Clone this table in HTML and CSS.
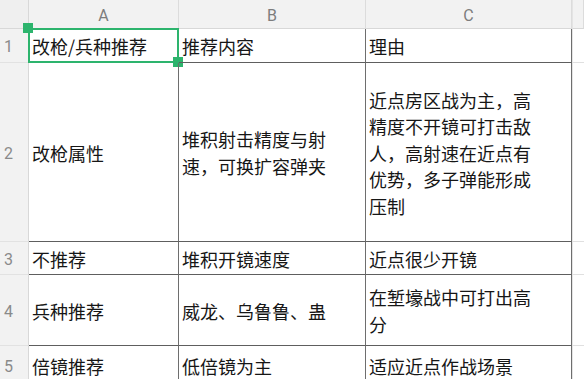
FILE: index.html
```html
<!DOCTYPE html>
<html lang="zh">
<head>
<meta charset="utf-8">
<link rel="stylesheet" href="styles.css">
</head>
<body>
<div class="sheet">
  <div class="corner"></div>
  <div class="colhead">A</div>
  <div class="colhead">B</div>
  <div class="colhead">C</div>
  <div class="colhead extra"></div>

  <div class="rowhead">1</div>
  <div class="cell sel">改枪/兵种推荐
    <div class="selbox"><span class="handle tl"></span><span class="handle br"></span></div>
  </div>
  <div class="cell">推荐内容</div>
  <div class="cell">理由</div>
  <div class="cell extra"></div>

  <div class="rowhead">2</div>
  <div class="cell">改枪属性</div>
  <div class="cell">堆积射击精度与射<br>速，可换扩容弹夹</div>
  <div class="cell">近点房区战为主，高<br>精度不开镜可打击敌<br>人，高射速在近点有<br>优势，多子弹能形成<br>压制</div>
  <div class="cell extra"></div>

  <div class="rowhead">3</div>
  <div class="cell">不推荐</div>
  <div class="cell">堆积开镜速度</div>
  <div class="cell">近点很少开镜</div>
  <div class="cell extra"></div>

  <div class="rowhead">4</div>
  <div class="cell">兵种推荐</div>
  <div class="cell">威龙、乌鲁鲁、蛊</div>
  <div class="cell">在堑壕战中可打出高<br>分</div>
  <div class="cell extra"></div>

  <div class="rowhead">5</div>
  <div class="cell">倍镜推荐</div>
  <div class="cell">低倍镜为主</div>
  <div class="cell">适应近点作战场景</div>
  <div class="cell extra"></div>
</div>
</body>
</html>
```
FILE: styles.css
```css
html, body {
  margin: 0;
  padding: 0;
  background: #ffffff;
  overflow: hidden;
}
body {
  width: 584px;
  height: 379px;
  font-family: "Noto Sans CJK SC", "Noto Sans", sans-serif;
}
.sheet {
  display: grid;
  grid-template-columns: 29px 150px 187px 206px 1fr;
  grid-template-rows: 29px 34px 179px 33px 71px 40px;
  width: 584px;
}
.sheet > div {
  box-sizing: border-box;
}
.corner {
  background: #efefef;
  border-right: 1px solid #d8d8d8;
  border-bottom: 1px solid #d8d8d8;
}
.colhead {
  background: #f2f2f2;
  border-right: 1px solid #dcdcdc;
  border-bottom: 1px solid #d8d8d8;
  color: #7d7d7d;
  font-family: "Roboto", "Noto Sans", sans-serif;
  font-size: 16px;
  display: flex;
  align-items: center;
  justify-content: center;
  padding-top: 2px;
}
.colhead.extra {
  border-left: 1px solid #e4e4e4;
}
.rowhead {
  background: #f2f2f2;
  border-right: 1px solid #d8d8d8;
  border-bottom: 1px solid #e2e2e2;
  color: #8a8a8a;
  font-family: "Roboto", "Noto Sans", sans-serif;
  font-size: 16px;
  display: flex;
  align-items: center;
  padding-left: 4px;
  padding-top: 2px;
}
.cell {
  border-right: 1px solid #6e6e6e;
  border-bottom: 1px solid #5e5e5e;
  color: #161616;
  font-size: 18px;
  line-height: 26.6px;
  display: flex;
  align-items: center;
  padding: 2px 3px 0 3px;
  position: relative;
  white-space: nowrap;
}
.cell.extra {
  border-right: none;
  border-left: 1px solid #e4e4e4;
  border-bottom: 1px solid #e0e0e0;
}
.selbox {
  position: absolute;
  left: -1px;
  top: -1px;
  width: 151px;
  height: 35px;
  box-sizing: border-box;
  border: 2px solid #2db46d;
}
.handle {
  position: absolute;
  width: 10px;
  height: 10px;
  background: #2db46d;
}
.handle.tl {
  left: -7px;
  top: -7px;
}
.handle.br {
  right: -6px;
  bottom: -6px;
}
```
